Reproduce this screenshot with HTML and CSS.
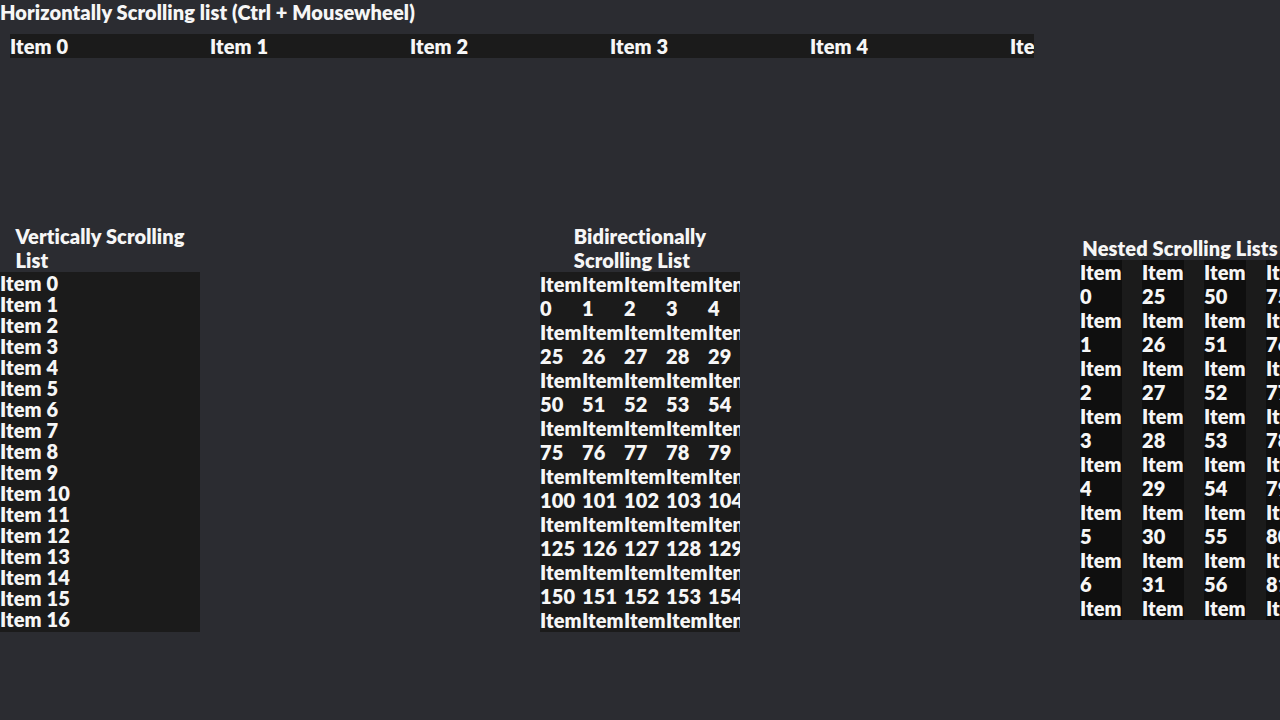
FILE: index.html
```html
<!DOCTYPE html>
<html>
<head>
<meta charset="utf-8">
<link rel="stylesheet" href="styles.css">
</head>
<body>
<div class="page">
  <h1 class="title">Horizontally Scrolling list (Ctrl + Mousewheel)</h1>
  <div class="hlist">
    <div class="hitem">Item 0</div>
    <div class="hitem">Item 1</div>
    <div class="hitem">Item 2</div>
    <div class="hitem">Item 3</div>
    <div class="hitem">Item 4</div>
    <div class="hitem">Item 5</div>
  </div>
  <div class="row">
    <section class="panel">
      <h2 class="heading">Vertically Scrolling<br>List</h2>
      <div class="vlist">
        <div class="vitem">Item 0</div>
        <div class="vitem">Item 1</div>
        <div class="vitem">Item 2</div>
        <div class="vitem">Item 3</div>
        <div class="vitem">Item 4</div>
        <div class="vitem">Item 5</div>
        <div class="vitem">Item 6</div>
        <div class="vitem">Item 7</div>
        <div class="vitem">Item 8</div>
        <div class="vitem">Item 9</div>
        <div class="vitem">Item 10</div>
        <div class="vitem">Item 11</div>
        <div class="vitem">Item 12</div>
        <div class="vitem">Item 13</div>
        <div class="vitem">Item 14</div>
        <div class="vitem">Item 15</div>
        <div class="vitem">Item 16</div>
        <div class="vitem">Item 17</div>
      </div>
    </section>
    <section class="panel">
      <h2 class="heading">Bidirectionally<br>Scrolling List</h2>
      <div class="grid">
        <div class="cell">Item 0</div><div class="cell">Item 1</div><div class="cell">Item 2</div><div class="cell">Item 3</div><div class="cell">Item 4</div>
        <div class="cell">Item 25</div><div class="cell">Item 26</div><div class="cell">Item 27</div><div class="cell">Item 28</div><div class="cell">Item 29</div>
        <div class="cell">Item 50</div><div class="cell">Item 51</div><div class="cell">Item 52</div><div class="cell">Item 53</div><div class="cell">Item 54</div>
        <div class="cell">Item 75</div><div class="cell">Item 76</div><div class="cell">Item 77</div><div class="cell">Item 78</div><div class="cell">Item 79</div>
        <div class="cell">Item 100</div><div class="cell">Item 101</div><div class="cell">Item 102</div><div class="cell">Item 103</div><div class="cell">Item 104</div>
        <div class="cell">Item 125</div><div class="cell">Item 126</div><div class="cell">Item 127</div><div class="cell">Item 128</div><div class="cell">Item 129</div>
        <div class="cell">Item 150</div><div class="cell">Item 151</div><div class="cell">Item 152</div><div class="cell">Item 153</div><div class="cell">Item 154</div>
        <div class="cell">Item 175</div><div class="cell">Item 176</div><div class="cell">Item 177</div><div class="cell">Item 178</div><div class="cell">Item 179</div>
      </div>
    </section>
    <section class="panel">
      <h2 class="heading">Nested Scrolling Lists</h2>
      <div class="nested">
        <div class="ncol">
          <div class="nitem">Item 0</div><div class="nitem">Item 1</div><div class="nitem">Item 2</div><div class="nitem">Item 3</div><div class="nitem">Item 4</div><div class="nitem">Item 5</div><div class="nitem">Item 6</div><div class="nitem">Item 7</div>
        </div>
        <div class="ncol">
          <div class="nitem">Item 25</div><div class="nitem">Item 26</div><div class="nitem">Item 27</div><div class="nitem">Item 28</div><div class="nitem">Item 29</div><div class="nitem">Item 30</div><div class="nitem">Item 31</div><div class="nitem">Item 32</div>
        </div>
        <div class="ncol">
          <div class="nitem">Item 50</div><div class="nitem">Item 51</div><div class="nitem">Item 52</div><div class="nitem">Item 53</div><div class="nitem">Item 54</div><div class="nitem">Item 55</div><div class="nitem">Item 56</div><div class="nitem">Item 57</div>
        </div>
        <div class="ncol">
          <div class="nitem">Item 75</div><div class="nitem">Item 76</div><div class="nitem">Item 77</div><div class="nitem">Item 78</div><div class="nitem">Item 79</div><div class="nitem">Item 80</div><div class="nitem">Item 81</div><div class="nitem">Item 82</div>
        </div>
      </div>
    </section>
  </div>
</div>
</body>
</html>
```
FILE: styles.css
```css
html, body {
  margin: 0;
  padding: 0;
  background: #2b2c31;
  overflow: hidden;
}

.page {
  width: 1280px;
  height: 720px;
  display: flex;
  flex-direction: column;
  font-family: "Lato", "Open Sans", sans-serif;
  font-weight: 800;
  font-size: 20px;
  line-height: 24px;
  letter-spacing: 0.1px;
  color: #f6f6f6;
}

.title {
  margin: 0;
  font-size: 20px;
  line-height: 24px;
  font-weight: 800;
}

.hlist {
  margin: 10px 0 0 10px;
  width: 1024px;
  height: 24px;
  display: flex;
  overflow: hidden;
  background: #1b1b1b;
}

.hitem {
  flex: 0 0 200px;
  white-space: nowrap;
}

.row {
  flex: 1;
  margin-top: 78px;
  display: flex;
  justify-content: space-between;
  align-items: center;
}

.panel {
  width: 200px;
  display: flex;
  flex-direction: column;
  overflow: hidden;
}

.heading {
  margin: 0;
  align-self: center;
  width: max-content;
  font-size: 20px;
  line-height: 24px;
  font-weight: 800;
}

.vlist {
  height: 360px;
  overflow: hidden;
  background: #1b1b1b;
  padding-top: 1px;
  box-sizing: border-box;
}

.vitem {
  line-height: 21px;
  white-space: nowrap;
}

.grid {
  height: 360px;
  overflow: hidden;
  background: #1b1b1b;
  display: grid;
  grid-template-columns: repeat(5, 42px);
  grid-auto-rows: 48px;
}

.nested {
  height: 360px;
  overflow: hidden;
  background: #1b1b1b;
  display: flex;
  gap: 20px;
}

.ncol {
  flex: 0 0 42px;
  background: #0f0f0f;
}

.nitem {
  height: 48px;
}
```
